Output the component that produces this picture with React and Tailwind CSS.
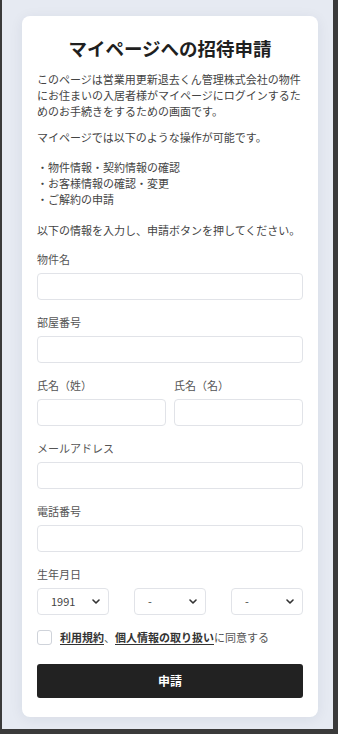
import React from "react";

const font = {
  fontFamily: '"Noto Sans CJK JP", "Noto Sans", sans-serif',
};

function Field({ label, children }) {
  return (
    <div>
      <div className="h-4 text-[11px] leading-4 text-[#555]">{label}</div>
      <div className="mt-[6px]">{children}</div>
    </div>
  );
}

function TextInput() {
  return (
    <input
      type="text"
      className="block h-[27px] w-full rounded-[4px] border border-[#e1e3e8] bg-white px-2 text-[11px] outline-none"
    />
  );
}

function Chevron() {
  return (
    <svg width="8" height="5" viewBox="0 0 8 5" fill="none">
      <path
        d="M1 1l3 3 3-3"
        stroke="#333"
        strokeWidth="1.6"
        strokeLinecap="round"
        strokeLinejoin="round"
      />
    </svg>
  );
}

function Select({ value }) {
  return (
    <div className="flex h-[27px] w-[72px] items-center justify-between rounded-[4px] border border-[#e1e3e8] bg-white pl-[13px] pr-[8px]">
      <span className="text-[11px] text-[#444]">{value}</span>
      <Chevron />
    </div>
  );
}

export default function App() {
  return (
    <div
      style={font}
      className="h-[734px] overflow-hidden border-b-[5px] border-l-2 border-r-[5px] border-[#3a3a3a] bg-[#e6eaf2] pt-4"
    >
      <div className="ml-5 w-[296px] rounded-lg bg-white px-[15px] pb-[19px] pt-[19px] shadow-[0_2px_14px_rgba(30,40,70,0.07)]">
        <h1 className="text-center text-[18.5px] font-bold leading-[26px] text-[#1f1f1f]">
          マイページへの招待申請
        </h1>

        <p className="mt-[10px] text-[11px] leading-4 text-[#444]">
          このページは営業用更新退去くん管理株式会社の物件にお住まいの入居者様がマイページにログインするためのお手続きをするための画面です。
        </p>
        <p className="mt-[10px] text-[11px] leading-4 text-[#444]">
          マイページでは以下のような操作が可能です。
        </p>
        <ul className="mt-[14px] text-[11px] leading-4 text-[#444]">
          <li>・物件情報・契約情報の確認</li>
          <li>・お客様情報の確認・変更</li>
          <li>・ご解約の申請</li>
        </ul>
        <p className="mt-[15px] text-[11px] leading-4 text-[#444]">
          以下の情報を入力し、申請ボタンを押してください。
        </p>

        <div className="mt-[13px] flex flex-col gap-[14px]">
          <Field label="物件名">
            <TextInput />
          </Field>
          <Field label="部屋番号">
            <TextInput />
          </Field>
          <div className="grid grid-cols-2 gap-2">
            <Field label="氏名（姓）">
              <TextInput />
            </Field>
            <Field label="氏名（名）">
              <TextInput />
            </Field>
          </div>
          <Field label="メールアドレス">
            <TextInput />
          </Field>
          <Field label="電話番号">
            <TextInput />
          </Field>
          <Field label="生年月日">
            <div className="flex justify-between">
              <Select value="1991" />
              <Select value="-" />
              <Select value="-" />
            </div>
          </Field>
        </div>

        <label className="mt-[14px] flex h-4 items-center gap-2">
          <span className="block h-[15px] w-[15px] rounded-[3px] border border-[#cfd3da] bg-white" />
          <span className="text-[11px] leading-4 text-[#555]">
            <span className="font-bold text-[#333] underline underline-offset-2">
              利用規約
            </span>
            、
            <span className="font-bold text-[#333] underline underline-offset-2">
              個人情報の取り扱い
            </span>
            に同意する
          </span>
        </label>

        <button className="mt-[19px] block h-[34px] w-full rounded-[3px] bg-[#222] text-[12px] font-bold text-white">
          申請
        </button>
      </div>
    </div>
  );
}
